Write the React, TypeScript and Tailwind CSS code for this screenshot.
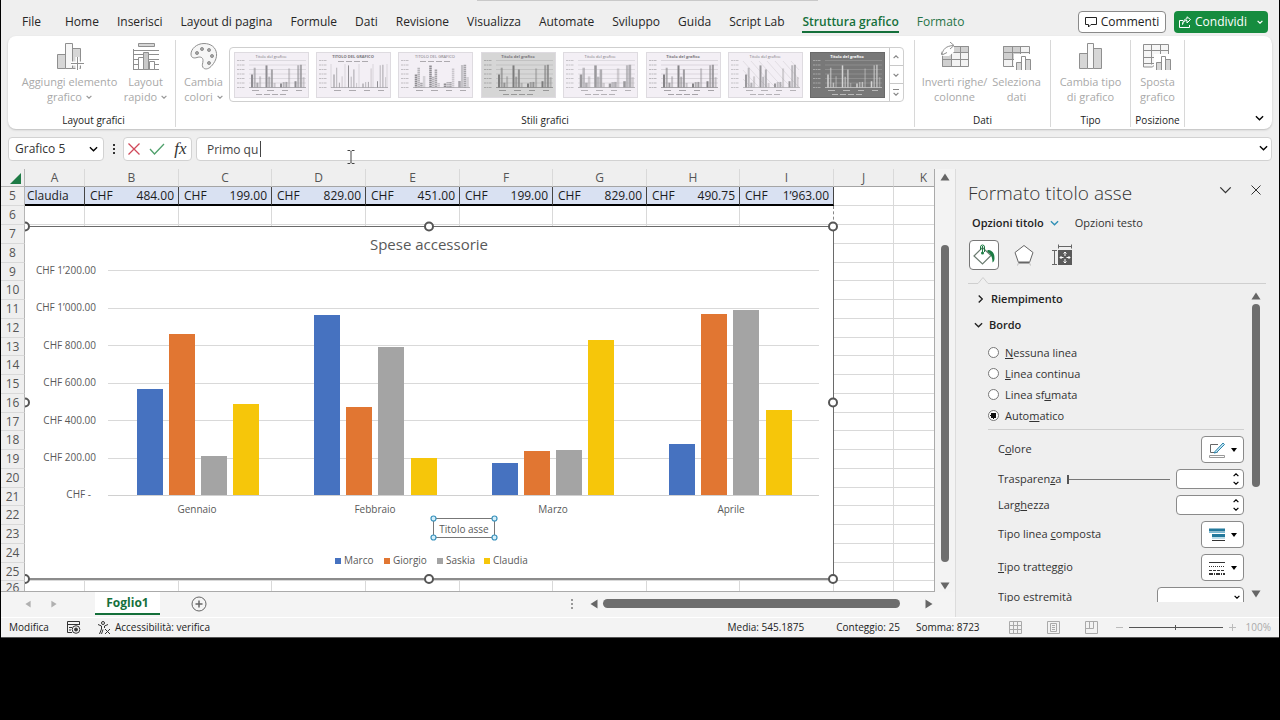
import React from "react";

type IconProps = { className?: string };

const tabs = [
  "Home",
  "Inserisci",
  "Layout di pagina",
  "Formule",
  "Dati",
  "Revisione",
  "Visualizza",
  "Automate",
  "Sviluppo",
  "Guida",
  "Script Lab",
];

const columns = [
  { name: "A", width: "w-[60px]" },
  { name: "B", width: "w-[94px]" },
  { name: "C", width: "w-[93px]" },
  { name: "D", width: "w-[94px]" },
  { name: "E", width: "w-[94px]" },
  { name: "F", width: "w-[93px]" },
  { name: "G", width: "w-[94px]" },
  { name: "H", width: "w-[93px]" },
  { name: "I", width: "w-[94px]" },
  { name: "J", width: "w-[60px]" },
  { name: "K", width: "w-[60px]" },
];

const amounts = ["484.00", "199.00", "829.00", "451.00", "199.00", "829.00", "490.75", "1’963.00"];

const emptyRows = Array.from({ length: 20 }, (_, i) => i + 6);

const series = [
  { name: "Marco", color: "#4672c0", values: [566, 961, 172, 273], legendX: 310 },
  { name: "Giorgio", color: "#e17632", values: [860, 471, 236, 967], legendX: 359 },
  { name: "Saskia", color: "#a4a4a4", values: [210, 787, 242, 988], legendX: 412 },
  { name: "Claudia", color: "#f6c60a", values: [484, 199, 829, 451], legendX: 459 },
];

const months = ["Gennaio", "Febbraio", "Marzo", "Aprile"];

const axisLabels = ["CHF 1’200.00", "CHF 1’000.00", "CHF 800.00", "CHF 600.00", "CHF 400.00", "CHF 200.00"];

function Chevron({ className = "" }: IconProps) {
  return (
    <svg viewBox="0 0 10 6" className={className} fill="none" stroke="currentColor" aria-hidden="true">
      <path d="M1 1l4 4 4-4" />
    </svg>
  );
}

function Triangle({ className = "" }: IconProps) {
  return (
    <svg viewBox="0 0 10 8" className={className} fill="currentColor" aria-hidden="true">
      <path d="M5 .5L9.5 7.5H.5z" />
    </svg>
  );
}

/* ---------- Ribbon icons ---------- */

function AddElementIcon() {
  return (
    <svg viewBox="0 0 28 28" className="h-7 w-7" stroke="#8f8f8f" aria-hidden="true">
      <path d="M1.5 12.5h8v14h-8zM16.5 6.5h8v20h-8z" fill="#d6d6d6" />
      <path d="M9.5 1.500h7v25h-7z" fill="#f6f6f6" />
      <path d="M21.5 15v14M15 21.5h13" stroke="#fff" strokeWidth="4" />
      <path d="M21.5 15v13M15 21.5h13" fill="none" />
    </svg>
  );
}

function QuickLayoutIcon() {
  return (
    <svg viewBox="0 0 28 28" className="h-7 w-7" fill="none" stroke="#8f8f8f" aria-hidden="true">
      <path d="M6.5 1.5h16v3h-16z" fill="#d6d6d6" />
      <path d="M1.5 7v20.5M1 8.5h26M1 12.5h26M1 17.5h26M1 22.5h26M1 27.5h26" />
      <path d="M6.5 15.5h5v12h-5zM17.5 19.5h5v8h-5z" fill="#fff" />
      <path d="M11.5 10.5h5v17h-5z" fill="#c9c9c9" />
    </svg>
  );
}

function PaletteIcon() {
  return (
    <svg viewBox="0 0 28 28" className="h-7 w-7" fill="#f6f6f6" stroke="#8f8f8f" aria-hidden="true">
      <path d="M14 1.5C6.5 1.5 1 7 1 12c0 4 3 4.500 6 3.500s6-.5 6 3-1.500 4 0 7c1.500 2 5 2 8-1 4-4 6-9 5.500-13C26 5.500 21 1.500 14 1.500z" />
      <g fill="#a5a5a5">
        <circle cx="7" cy="11" r="1.5" />
        <circle cx="12" cy="7" r="1.5" />
        <circle cx="19" cy="8" r="1.5" />
        <circle cx="22" cy="14" r="1.5" />
        <circle cx="19" cy="21" r="1.5" />
      </g>
    </svg>
  );
}

function SwapIcon() {
  return (
    <svg viewBox="0 0 28 28" className="h-7 w-7" fill="none" stroke="#8f8f8f" aria-hidden="true">
      <path d="M1.5 4.5h26v20h-26z" fill="#f3f3f3" />
      <path d="M1.5 4.5h26v6h-26zM1.5 10.5h9v14h-9z" fill="#d0d0d0" />
      <path d="M10.5 4.5v20M19.5 4.5v20M1.5 10.5h26M1.5 17.5h26" />
      <path d="M0 0h13v10l-5 4H0z" fill="#fff" stroke="none" />
      <path d="M1 12.5C2 7 5 4 12.5 3.500M9 0l4 3.500L9 7M-.5 9L1 13l5-2.500" />
    </svg>
  );
}

function SelectDataIcon() {
  return (
    <svg viewBox="0 0 28 28" className="h-7 w-7" fill="none" stroke="#8f8f8f" aria-hidden="true">
      <path d="M.5 4.5h26v20H.5z" fill="#f3f3f3" />
      <path d="M.5 4.5h17v13H.5z" fill="#cfcfcf" />
      <path d="M9.5 4.5v20M17.5 4.5v20M.5 10.5h26M.5 17.5h26" />
      <path d="M11 12h17v16H11z" fill="#fff" stroke="none" />
      <path d="M13.5 20.5h5v8h-5zM22.5 17.5h5v11h-5z" fill="#d6d6d6" />
      <path d="M18.5 14.5h4v14h-4z" fill="#fff" />
    </svg>
  );
}

function ColumnsIcon() {
  return (
    <svg viewBox="0 0 28 28" className="h-7 w-7" stroke="#8f8f8f" aria-hidden="true">
      <path d="M2.5 11.5h8v15h-8zM16.5 6.5h8v20h-8z" fill="#d6d6d6" />
      <path d="M10.5 1.5h6v25h-6z" fill="#f8f8f8" />
    </svg>
  );
}

function MoveChartIcon() {
  return (
    <svg viewBox="0 0 28 28" className="h-7 w-7" fill="none" stroke="#8f8f8f" aria-hidden="true">
      <path d="M.5 2.5h25v19l-13 .5-3 3h-9z" fill="#f6f6f6" />
      <path d="M8.5 2.5v20M17.5 2.5v16M.5 8.5h25M.5 15.5h25M.5 21.5h12" />
      <path d="M11 12h17v16H11z" fill="#fff" stroke="none" />
      <path d="M13.5 20.5h5v8h-5zM22.5 17.5h5v11h-5z" fill="#d6d6d6" />
      <path d="M18.5 14.5h4v14h-4z" fill="#fff" />
    </svg>
  );
}

type Thumb = {
  title: string;
  bg: string;
  ink: string;
  grid: "rows" | "columns" | "hatch" | "none";
  dashed?: boolean;
  bold?: boolean;
  barWidth: number;
  topLegend?: boolean;
};

const thumbs: Thumb[] = [
  { title: "Titolo del grafico", bg: "#f3eff5", ink: "#8f8d92", grid: "rows", barWidth: 2 },
  { title: "TITOLO DEL GRAFICO", bg: "#f3eff5", ink: "#8f8d92", grid: "columns", barWidth: 1, bold: true, topLegend: true },
  { title: "TITOLO DEL GRAFICO", bg: "#f3eff5", ink: "#8f8d92", grid: "none", barWidth: 2.5, dashed: true, topLegend: true },
  { title: "Titolo del grafico", bg: "#d6d6d6", ink: "#7c7c7c", grid: "rows", barWidth: 2, bold: true },
  { title: "Titolo del grafico", bg: "#f3eff5", ink: "#9a989c", grid: "rows", barWidth: 2.5 },
  { title: "Titolo del grafico", bg: "#f3eff5", ink: "#858387", grid: "rows", barWidth: 2, bold: true },
  { title: "Titolo del grafico", bg: "#f3eff5", ink: "#9a989c", grid: "hatch", barWidth: 2 },
  { title: "Titolo del grafico", bg: "#787878", ink: "#d5d5d5", grid: "rows", barWidth: 1.5, bold: true },
];

const barOpacity = [1, 0.6, 0.75, 0.4];

function StyleThumb({ thumb }: { thumb: Thumb }) {
  const dark = thumb.bg === "#787878";
  return (
    <svg viewBox="0 0 75 46" className="h-[46px] w-[75px]" aria-hidden="true">
      <rect x=".5" y=".5" width="74" height="45" fill={thumb.bg} stroke={dark ? "#6a6a6a" : "#dedbe0"} />
      <text
        x="37"
        y="6"
        textAnchor="middle"
        fontSize="4"
        fontWeight={thumb.bold ? 700 : 400}
        fill={dark ? "#fff" : "#77757a"}
      >
        {thumb.title}
      </text>
      {[0, 1, 2, 3, 4, 5, 6].map((n) => (
        <g key={n} stroke={thumb.ink}>
          <path d={`M3 ${8.5 + n * 4.5}h8`} strokeDasharray="2 .5" strokeOpacity=".5" />
          {thumb.grid === "rows" && <path d={`M15 ${8.5 + n * 4.5}h57`} strokeWidth=".5" strokeOpacity=".45" />}
          {thumb.grid === "columns" && n < 5 && <path d={`M${15 + n * 14} 12v24`} strokeWidth=".5" strokeOpacity=".5" />}
          {thumb.grid === "hatch" && (
            <path
              d={`M${15 + n * 8} 9l8 9M${15 + n * 8} 18l8 9M${15 + n * 8} 27l8 8`}
              strokeWidth=".4"
              strokeOpacity=".5"
            />
          )}
        </g>
      ))}
      {series.map((s, i) =>
        s.values.map((v, m) => {
          const height = v * 0.023;
          const x = 18 + m * 14.5 + i * 2.7;
          return (
            <path
              key={`${i}-${m}`}
              d={`M${x} ${35.5 - height}V35.5`}
              stroke={thumb.ink}
              strokeWidth={thumb.barWidth}
              strokeOpacity={barOpacity[i]}
              strokeDasharray={thumb.dashed ? "1.5 .5" : undefined}
            />
          );
        })
      )}
      <path d="M15 35.5h57" stroke={thumb.ink} strokeWidth=".6" />
      <path d="M18 38.5h7M33 38.5h7M48 38.5h6M62 38.5h6" stroke={thumb.ink} strokeOpacity=".7" />
      <path d={thumb.topLegend ? "M22 9.5h32" : "M22 42.5h32"} stroke={thumb.ink} strokeDasharray="6 2" strokeOpacity=".7" />
    </svg>
  );
}

function RibbonButton({
  icon,
  lines,
  menu = false,
  className = "",
}: {
  icon: React.ReactNode;
  lines: [string, string];
  menu?: boolean;
  className?: string;
}) {
  return (
    <button className={`flex flex-col items-center pt-0.5 text-[11px] leading-[15px] whitespace-nowrap text-[#a9a9a9] ${className}`}>
      {icon}
      <span className="mt-1">{lines[0]}</span>
      <span className="flex items-center gap-1">
        {lines[1]}
        {menu && <Chevron className="h-1 w-1.5 stroke-2 text-[#999]" />}
      </span>
    </button>
  );
}

function RibbonGroup({ label, className, children }: { label: string; className: string; children: React.ReactNode }) {
  return (
    <section className={`mt-1 mb-0.5 flex flex-col justify-between border-r border-[#d8d8d8] ${className}`}>
      <div className="flex justify-center">{children}</div>
      <h2 className="text-center text-[10px] leading-[14px] text-[#222]">{label}</h2>
    </section>
  );
}

function Ribbon() {
  return (
    <div className="mx-[7px] flex h-[93px] rounded-lg bg-white shadow-[0_1px_2px_#bdbdbd]">
      <RibbonGroup label="Layout grafici" className="w-[168px] pl-1">
        <RibbonButton icon={<AddElementIcon />} lines={["Aggiungi elemento", "grafico"]} menu className="w-[104px]" />
        <RibbonButton icon={<QuickLayoutIcon />} lines={["Layout", "rapido"]} menu className="w-[48px]" />
      </RibbonGroup>

      <RibbonGroup label="Stili grafici" className="w-[739px]">
        <RibbonButton icon={<PaletteIcon />} lines={["Cambia", "colori"]} menu className="w-[50px]" />
        <div className="mt-[7px] mr-2 flex h-[55px] w-[675px] rounded border border-[#cfcfcf]">
          <div className="flex grow items-center justify-between pr-[3px] pl-1">
            {thumbs.map((thumb, i) => (
              <button key={i} aria-label={`Stile ${i + 1}`}>
                <StyleThumb thumb={thumb} />
              </button>
            ))}
          </div>
          <div className="flex w-[14px] flex-col divide-y divide-[#c8c8c8] border-l border-[#c8c8c8] text-[#888]">
            <button aria-label="Su" className="flex flex-1 items-center justify-center">
              <Chevron className="h-1 w-1.5 rotate-180 stroke-2" />
            </button>
            <button aria-label="Giù" className="flex flex-1 items-center justify-center">
              <Chevron className="h-1 w-1.5 stroke-2" />
            </button>
            <button aria-label="Altro" className="flex flex-1 flex-col items-center justify-center gap-0.5">
              <span className="h-px w-1.5 bg-[#888]" />
              <Chevron className="h-1 w-1.5 stroke-2" />
            </button>
          </div>
        </div>
      </RibbonGroup>

      <RibbonGroup label="Dati" className="w-[136px]">
        <RibbonButton icon={<SwapIcon />} lines={["Inverti righe/", "colonne"]} className="w-[68px]" />
        <RibbonButton icon={<SelectDataIcon />} lines={["Seleziona", "dati"]} className="w-[56px]" />
      </RibbonGroup>
      <RibbonGroup label="Tipo" className="w-[80px]">
        <RibbonButton icon={<ColumnsIcon />} lines={["Cambia tipo", "di grafico"]} />
      </RibbonGroup>
      <RibbonGroup label="Posizione" className="w-[54px]">
        <RibbonButton icon={<MoveChartIcon />} lines={["Sposta", "grafico"]} />
      </RibbonGroup>
      <button aria-label="Opzioni barra multifunzione" className="mr-2 mb-2 ml-auto self-end text-black">
        <Chevron className="h-[6px] w-[9px] stroke-[1.5]" />
      </button>
    </div>
  );
}

function TabBar() {
  return (
    <header className="flex h-9 items-center pt-2 pr-[11px] pl-[21px] text-[12px]">
      <div className="absolute top-0 left-[477px] h-px w-[341px] bg-[#c9c9c9]" />
      <nav className="flex items-center whitespace-nowrap text-[#262626]">
        <button className="mr-6">File</button>
        <div className="flex gap-[18px]">
          {tabs.map((tab) => (
            <button key={tab}>{tab}</button>
          ))}
          <button className="border-b-2 border-[#15703b] pt-0.5 font-semibold text-[#15703b]">Struttura grafico</button>
          <button className="text-[#267346]">Formato</button>
        </div>
      </nav>
      <div className="ml-auto flex gap-2">
        <button className="flex h-[22px] w-[88px] items-center justify-center gap-1 rounded border border-[#8a8a8a] bg-white text-[#222]">
          <svg viewBox="0 0 12 12" className="h-3 w-3" fill="none" stroke="currentColor" aria-hidden="true">
            <path d="M.5 1.5h11v7H6L3.5 11V8.5h-3z" />
          </svg>
          Commenti
        </button>
        <button className="flex h-[22px] w-[94px] items-center justify-center gap-1 rounded bg-[#168c3f] text-white">
          <svg viewBox="0 0 12 12" className="h-3 w-3" fill="none" stroke="currentColor" aria-hidden="true">
            <path d="M4 4.5H.5v7h10V9M3.5 8.5C4 5.5 5.5 4.5 8 4.5V7l3.5-3.5L8 .8v2C5.5 3 3.8 5 3.5 8.500z" />
          </svg>
          Condividi
          <Chevron className="ml-1.5 h-1 w-1.5 stroke-2" />
        </button>
      </div>
    </header>
  );
}

function FormulaBar() {
  return (
    <div className="mx-[7px] my-2 flex h-6 items-stretch text-[12px] text-[#333]">
      <div className="relative w-[96px]">
        <select aria-label="Casella nome" className="h-full w-full appearance-none rounded border border-[#d2d2d2] bg-white pl-1.5">
          <option>Grafico 5</option>
        </select>
        <Chevron className="pointer-events-none absolute top-[9px] right-1.5 h-[6px] w-[9px] stroke-[1.5] text-black" />
      </div>
      <div className="flex w-[19px] flex-col items-center justify-center gap-0.5">
        <span className="size-0.5 bg-[#333]" />
        <span className="size-0.5 bg-[#333]" />
        <span className="size-0.5 bg-[#333]" />
      </div>
      <div className="flex w-[69px] items-center justify-around rounded border border-[#d2d2d2] bg-white">
        <button aria-label="Annulla">
          <svg viewBox="0 0 12 12" className="h-3 w-3" stroke="#d0495a" strokeWidth="1.3" aria-hidden="true">
            <path d="M.5.5l11 11M11.5.5l-11 11" />
          </svg>
        </button>
        <button aria-label="Invio">
          <svg viewBox="0 0 16 12" className="h-3 w-4" fill="none" stroke="#4fa06b" strokeWidth="1.3" aria-hidden="true">
            <path d="M1 6l4.5 5L15 1" />
          </svg>
        </button>
        <button aria-label="Inserisci funzione" className="font-['Liberation_Serif',serif] text-[17px] leading-4 italic">
          fx
        </button>
      </div>
      <div className="relative ml-1 grow">
        <input
          aria-label="Barra della formula"
          defaultValue="Primo qu"
          className="h-full w-full rounded border border-[#d2d2d2] bg-white pl-2.5 text-[#444]"
        />
        <span className="absolute top-1 left-16 h-4 w-px bg-[#444]" />
        <svg viewBox="0 0 8 16" className="absolute top-3 left-[151px] h-4 w-2" fill="none" stroke="#444" aria-hidden="true">
          <path d="M.5 1.5h2.5l1 1 1-1h2.5M4 2.5v11M.5 14.5h2.5l1-1 1 1h2.5" />
        </svg>
        <Chevron className="absolute top-2 right-1 h-[6px] w-[9px] stroke-[1.5] text-black" />
      </div>
    </div>
  );
}

function Chart() {
  const baseline = 276;
  return (
    <svg
      viewBox="0 0 815 367"
      className="absolute top-[50px] left-6 h-[367px] w-[815px]"
      fill="#595959"
      fontSize="10"
      role="img"
      aria-label="Spese accessorie"
    >
      <rect x="0" y="7" width="808" height="353" fill="#fff" />
      <path d="M0 7.5h808.5v353" fill="none" stroke="#6a6a6a" />
      <path d="M0 360h808" stroke="#8c8c8c" strokeWidth="2" />
      <text x="404" y="31" textAnchor="middle" fontSize="15">
        Spese accessorie
      </text>
      {axisLabels.map((label, i) => (
        <g key={label}>
          <text x="71" y={Math.round(55 + i * 37.4)} textAnchor="end">
            {label}
          </text>
          <path d={`M83 ${Math.round(51 + i * 37.5) + 0.5}h711`} stroke="#d9d9d9" />
        </g>
      ))}
      <text x="66" y="279" textAnchor="end">
        CHF -
      </text>
      {series.map((s, i) =>
        s.values.map((v, m) => {
          const height = Math.round(v * 0.1875);
          return (
            <rect
              key={`${s.name}-${m}`}
              x={Math.round(111.5 + m * 177.5 + i * 32.2)}
              y={baseline - height}
              width="26"
              height={height}
              fill={s.color}
            />
          );
        })
      )}
      <path d="M83 276.5h711" stroke="#d0d0d0" />
      {months.map((month, m) => (
        <text key={month} x={172 + m * 178} y="294" textAnchor="middle">
          {month}
        </text>
      ))}
      {series.map((s) => (
        <g key={s.name}>
          <rect x={s.legendX} y="339" width="6" height="6" fill={s.color} />
          <text x={s.legendX + 9} y="345">
            {s.name}
          </text>
        </g>
      ))}

      {/* axis title being edited */}
      <rect x="408.5" y="299.5" width="61" height="19" fill="#fff" stroke="#777" />
      <text x="439" y="314" textAnchor="middle">
        Titolo asse
      </text>
      <g fill="#d5effa" stroke="#3a93bd" strokeWidth="1.2">
        <circle cx="408.5" cy="299.5" r="2.5" />
        <circle cx="469.5" cy="299.5" r="2.5" />
        <circle cx="408.5" cy="318.5" r="2.5" />
        <circle cx="469.5" cy="318.5" r="2.5" />
      </g>

      <g fill="#fff" stroke="#555" strokeWidth="2">
        {[0, 404, 808].map((x) => (
          <React.Fragment key={x}>
            <circle cx={x} cy="7.5" r="4" />
            <circle cx={x} cy="360" r="4" />
          </React.Fragment>
        ))}
        <circle cx="0" cy="183.5" r="4" />
        <circle cx="808" cy="183.5" r="4" />
      </g>
    </svg>
  );
}

function Sheet() {
  return (
    <div className="relative min-w-0 grow overflow-hidden border-r border-b border-[#aaa] bg-white">
      <table className="w-[853px] table-fixed border-separate border-spacing-0 text-[12px] leading-none">
        <thead>
          <tr className="h-[18px] text-[#555]">
            <th className="w-6 border-r border-b border-[#b5b5b5] bg-[#efefef] p-0 pr-0.5" aria-label="Seleziona tutto">
              <svg viewBox="0 0 12 12" className="ml-auto block h-3 w-3" fill="#1e7b45" aria-hidden="true">
                <path d="M11 1v11H0z" />
              </svg>
            </th>
            {columns.map((col) => (
              <th
                key={col.name}
                className={`border-r border-b border-r-[#d9d9d9] border-b-[#a5a5a5] bg-[#efefef] p-0 font-normal ${col.width}`}
              >
                {col.name}
              </th>
            ))}
          </tr>
        </thead>
        <tbody>
          <tr className="h-[19px] text-[#1c1c1c]">
            <th className="border-r border-b border-r-[#b5b5b5] border-b-[#d9d9d9] bg-[#efefef] p-0 font-normal text-[#555]">5</th>
            <td className="border-r border-b-2 border-r-[#444] border-b-black bg-[#d9e1f2] p-0 pl-0.5">Claudia</td>
            {amounts.map((amount, i) => (
              <td key={i} className="border-r border-b-2 border-r-[#444] border-b-black bg-[#d9e1f2] p-0 last-of-type:border-r-0">
                <div className="flex justify-between pr-1 pl-[5px]">
                  <span>CHF</span>
                  <span>{amount}</span>
                </div>
              </td>
            ))}
            <td className="border-r border-b border-[#d9d9d9] p-0" />
            <td className="border-b border-[#d9d9d9] p-0" />
          </tr>
          {emptyRows.map((row, i) => (
            <tr key={row} className={i % 4 === 3 ? "h-[18px]" : "h-[19px]"}>
              <th className="border-r border-b border-r-[#b5b5b5] border-b-[#d9d9d9] bg-[#efefef] p-0 font-normal text-[#555]">
                {row}
              </th>
              {columns.map((col) => (
                <td
                  key={col.name}
                  className={
                    col.name === "I"
                      ? "border-r border-b border-r-[#888] border-b-[#d9d9d9] p-0 [border-right-style:dashed]"
                      : "border-r border-b border-[#d9d9d9] p-0"
                  }
                />
              ))}
            </tr>
          ))}
          <tr className="h-[10px]">
            <th className="border-r border-[#b5b5b5] bg-[#efefef] p-0 font-normal text-[#555]">
              <div className="h-[9px] overflow-hidden">26</div>
            </th>
            {columns.map((col) => (
              <td key={col.name} className="border-r border-[#d9d9d9] p-0" />
            ))}
          </tr>
        </tbody>
      </table>
      <Chart />
    </div>
  );
}

function SheetTabs() {
  return (
    <div className="flex h-[25px] items-center bg-[#f4f4f4] pb-0.5 text-[#666]">
      <div className="flex w-[94px] items-center gap-[18px] pl-[23px] text-[#b0b0b0]">
        <button aria-label="Foglio precedente">
          <Triangle className="h-1.5 w-2 -rotate-90" />
        </button>
        <button aria-label="Foglio successivo">
          <Triangle className="h-1.5 w-2 rotate-90" />
        </button>
      </div>
      <button className="h-[23px] w-[65px] border-b-2 border-[#15703b] bg-white text-[12px] font-bold text-[#15703b]">
        Foglio1
      </button>
      <button aria-label="Nuovo foglio" className="ml-[31px]">
        <svg viewBox="0 0 16 16" className="h-4 w-4" fill="none" stroke="currentColor" aria-hidden="true">
          <circle cx="8" cy="8" r="7" />
          <path d="M4.5 8h7M8 4.5v7" strokeWidth="1.5" />
        </svg>
      </button>
      <div className="ml-auto flex flex-col gap-0.5">
        <span className="size-0.5 bg-[#999]" />
        <span className="size-0.5 bg-[#999]" />
        <span className="size-0.5 bg-[#999]" />
      </div>
      <div className="ml-4 flex items-center">
        <Triangle className="h-2 w-2.5 -rotate-90" />
        <div className="ml-1 h-[9px] w-[297px] rounded-full bg-[#6e6e6e]" />
        <Triangle className="mr-[21px] ml-6 h-2 w-2.5 rotate-90" />
      </div>
    </div>
  );
}

function Spinner({ id }: { id: string }) {
  return (
    <div className="relative">
      <input id={id} className="block h-5 w-[68px] rounded border border-[#8a8a8a] bg-white px-1" />
      <div className="absolute top-1 right-[5px] flex flex-col gap-1 text-black">
        <button aria-label="Aumenta">
          <Chevron className="block h-1 w-1.5 rotate-180 stroke-2" />
        </button>
        <button aria-label="Riduci">
          <Chevron className="block h-1 w-1.5 stroke-2" />
        </button>
      </div>
    </div>
  );
}

function PickerButton({ label, children }: { label: string; children: React.ReactNode }) {
  return (
    <button aria-label={label} className="flex h-[27px] w-[43px] items-center justify-center gap-1.5 rounded border border-[#8a8a8a] bg-white">
      {children}
      <svg viewBox="0 0 6 4" className="h-1 w-1.5" aria-hidden="true">
        <path d="M0 0h6L3 4z" />
      </svg>
    </button>
  );
}

function LineOption({ before = "", letter, after, checked = false }: { before?: string; letter: string; after: string; checked?: boolean }) {
  return (
    <label className="flex h-[21px] items-center gap-1.5">
      <input
        type="radio"
        name="bordo"
        defaultChecked={checked}
        className="mb-0.5 size-[11px] appearance-none rounded-full border border-[#777] bg-white checked:bg-[radial-gradient(circle,#111_0_3px,#fff_3px)]"
      />
      <span>
        {before}
        <u>{letter}</u>
        {after}
      </span>
    </label>
  );
}

function FormatPane() {
  return (
    <aside className="flex w-[324px] shrink-0 flex-col border-l border-[#dcdcdc] pl-3 text-[11px] text-[#333]">
      <div className="flex items-center pt-[11px]">
        <h1 className="text-[19px] leading-[26px] font-light text-[#333]">Formato titolo asse</h1>
        <button aria-label="Opzioni riquadro" className="mb-1.5 ml-auto">
          <Chevron className="h-2 w-[13px]" />
        </button>
        <button aria-label="Chiudi" className="mr-[18px] mb-1.5 ml-[19px]">
          <svg viewBox="0 0 10 10" className="h-2.5 w-2.5" stroke="currentColor" aria-hidden="true">
            <path d="M.5.5l9 9M9.5.5l-9 9" />
          </svg>
        </button>
      </div>

      <div className="mt-2 flex items-center pl-1 leading-[18px]">
        <button className="font-semibold text-[#222]">Opzioni titolo</button>
        <Chevron className="ml-1.5 h-[6px] w-[9px] stroke-[1.5] text-[#2f8fb5]" />
        <button className="ml-4">Opzioni testo</button>
      </div>

      <div className="mt-2 flex items-center gap-[14px] pl-px">
        <button aria-label="Riempimento e linea" className="flex size-[30px] items-center justify-center rounded border border-[#777] bg-white">
          <svg viewBox="0 0 24 24" className="h-6 w-6" fill="none" aria-hidden="true">
            <path d="M2 13l8.500-8.500L19 12.5 10.500 21z" stroke="#6b7b70" strokeWidth="1.2" />
            <path d="M15.500 7c4 0 7 2.500 7 8 0 2-.5 3.500-2 4.500C20.500 15 19 10.500 15.500 9z" fill="#1c7c44" />
            <path d="M8.500 7V4a2 2 0 0 1 4 0v5" stroke="#1c7c44" />
            <path d="M10.500 3v6" stroke="#1c7c44" />
            <circle cx="10.500" cy="10" r="1.5" fill="#1c7c44" />
          </svg>
        </button>
        <button aria-label="Effetti">
          <svg viewBox="0 0 22 22" className="h-[22px] w-[22px]" fill="#fff" stroke="#666" aria-hidden="true">
            <path d="M11 1.5l9 7-3.500 10h-11L2 8.500z" />
            <path d="M6 18.5h10" strokeWidth="2" />
            <path d="M4.5 21.5l1-2.500M17.500 21.500l-1-2.500" stroke="#bbb" />
          </svg>
        </button>
        <button aria-label="Dimensioni e proprietà">
          <svg viewBox="0 0 22 22" className="ml-0.5 h-[22px] w-[22px]" fill="none" stroke="#666" aria-hidden="true">
            <path d="M7.5 2.5h13M7.5.5v4M20.5.5v4M3.5 7v13M1 6.5h5M1 20.5h5" />
            <path d="M7 6h14v15H7z" fill="#5a5a5a" stroke="none" />
            <path
              d="M14 8v11M9 13.5h10M12.5 9.5L14 8l1.5 1.5M12.5 17.5L14 19l1.5-1.5M10.5 12L9 13.5l1.5 1.5M17.5 12l1.5 1.5-1.5 1.5"
              stroke="#fff"
            />
            <path d="M12.5 12h3v3h-3z" fill="#5a5a5a" stroke="none" />
          </svg>
        </button>
      </div>

      <svg viewBox="0 0 298 8" className="mt-1.5 h-2 w-[298px]" fill="none" stroke="#cfcfcf" aria-hidden="true">
        <path d="M0 7.5h10l5-6 5 6h278" />
      </svg>

      <div className="flex pr-[15px]">
        <div className="grow pt-0.5 pr-1">
          <button className="flex h-[26px] items-center gap-1.5 pl-2 font-semibold text-[#222]">
            <Chevron className="h-[6px] w-[9px] -rotate-90 stroke-[1.5]" />
            Riempimento
          </button>
          <button className="flex h-[26px] items-center gap-1.5 pl-1.5 font-semibold text-[#222]">
            <Chevron className="h-[6px] w-[9px] stroke-[1.5]" />
            Bordo
          </button>

          <fieldset className="mt-[5px] ml-5 border-b border-[#cfcfcf] pb-0.5">
            <LineOption letter="N" after="essuna linea" />
            <LineOption letter="L" after="inea continua" />
            <LineOption before="Linea sf" letter="u" after="mata" />
            <LineOption before="Auto" letter="m" after="atico" checked />
          </fieldset>

          <div className="mt-1.5 ml-[30px] flex flex-col gap-1.5">
            <div className="flex items-center justify-between">
              <span>
                C<u>o</u>lore
              </span>
              <PickerButton label="Colore">
                <svg viewBox="0 0 16 16" className="h-4 w-4" fill="none" stroke="#666" aria-hidden="true">
                  <path d="M9 2.5H1.5v8h7" />
                  <path d="M6 9.5L14 1l1.500 1.500-8 8-2.500.5z" stroke="#2c86ad" fill="#c3e4f2" />
                  <path d="M.5 13.5h15v2H.5z" stroke="#999" />
                </svg>
              </PickerButton>
            </div>
            <div className="flex items-center">
              <label htmlFor="trasparenza">
                Trasparen<u>z</u>a
              </label>
              <input
                type="range"
                aria-label="Trasparenza"
                defaultValue={0}
                className="mx-1.5 h-3 w-0 grow appearance-none bg-transparent [&::-webkit-slider-runnable-track]:h-px [&::-webkit-slider-runnable-track]:bg-[#777] [&::-webkit-slider-thumb]:-mt-1 [&::-webkit-slider-thumb]:h-[9px] [&::-webkit-slider-thumb]:w-0.5 [&::-webkit-slider-thumb]:appearance-none [&::-webkit-slider-thumb]:bg-[#555]"
              />
              <Spinner id="trasparenza" />
            </div>
            <div className="flex items-center justify-between">
              <label htmlFor="larghezza">
                Larg<u>h</u>ezza
              </label>
              <Spinner id="larghezza" />
            </div>
            <div className="flex items-center justify-between">
              <span>
                Tipo linea <u>c</u>omposta
              </span>
              <PickerButton label="Tipo linea composta">
                <svg viewBox="0 0 16 14" className="h-[14px] w-4" fill="none" aria-hidden="true">
                  <path d="M0 2h16M3 7.5h13" stroke="#23799c" strokeWidth="3" />
                  <path d="M0 4.5h16M3 10h13" stroke="#7dbad3" />
                  <path d="M3 12.5h13" stroke="#333" />
                </svg>
              </PickerButton>
            </div>
            <div className="flex items-center justify-between">
              <span>
                <u>T</u>ipo tratteggio
              </span>
              <PickerButton label="Tipo tratteggio">
                <svg viewBox="0 0 16 14" className="h-[14px] w-4" fill="none" stroke="#333" aria-hidden="true">
                  <path d="M0 1.5h16" />
                  <path d="M0 5.5h16" strokeDasharray="1 1" />
                  <path d="M0 9.5h16" strokeDasharray="3 1" />
                  <path d="M0 13h16" strokeDasharray="4 1 1 1" strokeWidth="2" />
                </svg>
              </PickerButton>
            </div>
            <div className="flex h-[15px] items-start justify-between overflow-hidden">
              <label htmlFor="estremita" className="pt-0.5">
                Tipo estremità
              </label>
              <div className="relative">
                <select id="estremita" className="h-5 w-[87px] appearance-none rounded border border-[#8a8a8a] bg-white" />
                <Chevron className="pointer-events-none absolute top-2 right-1 h-1 w-1.5 stroke-2 text-black" />
              </div>
            </div>
          </div>
        </div>

        <div className="flex w-4 flex-col items-center pt-2 text-[#666]">
          <Triangle className="h-2 w-2.5" />
          <div className="mt-1 h-[183px] w-2 rounded-full bg-[#6e6e6e]" />
          <Triangle className="mt-auto mb-1 h-2 w-2.5 rotate-180" />
        </div>
      </div>
    </aside>
  );
}

function StatusBar() {
  return (
    <footer className="flex h-[21px] items-center border-t border-b border-t-white border-b-[#555] bg-[#f3f3f3] px-2 text-[10px] text-[#222]">
      <span>Modifica</span>
      <button aria-label="Registra macro" className="ml-[18px]">
        <svg viewBox="0 0 14 13" className="h-[13px] w-[14px]" fill="none" stroke="#333" aria-hidden="true">
          <path d="M5 11.5H.5V.5h12V4M.5 3.5h12M2 6.5h3M2 9h2" />
          <circle cx="9" cy="8.5" r="3.8" />
          <circle cx="9" cy="8.5" r="1.5" fill="#333" />
        </svg>
      </button>
      <button className="ml-4 flex items-center gap-1">
        <svg viewBox="0 0 14 14" className="h-[14px] w-[14px]" fill="none" stroke="#333" aria-hidden="true">
          <circle cx="6" cy="2" r="1.5" />
          <path d="M1 3.5l3.500 1.500v3L2.500 13M11 3.500L7.500 5v2M6 8.500L4.500 13M8 8l5 5M13 8l-5 5" />
        </svg>
        Accessibilità: verifica
      </button>
      <div className="ml-auto flex gap-4">
        <span className="mr-4">Media: 545.1875</span>
        <span>Conteggio: 25</span>
        <span>Somma: 8723</span>
      </div>
      <div className="ml-[29px] flex items-center gap-[25px]">
        <button aria-label="Normale">
          <svg viewBox="0 0 13 13" className="h-[13px] w-[13px]" fill="none" stroke="#aaa" aria-hidden="true">
            <path d="M.5.5h12v12H.5zM.5 4.5h12M.5 8.5h12M4.5.5v12M8.5.5v12" />
          </svg>
        </button>
        <button aria-label="Layout di pagina">
          <svg viewBox="0 0 13 13" className="h-[13px] w-[13px]" fill="none" stroke="#aaa" aria-hidden="true">
            <path d="M.5.5h12v12H.5zM3.5 2.5h6v8h-6zM5 4.5h3M5 6.5h3M5 8.5h3" />
          </svg>
        </button>
        <button aria-label="Anteprima interruzioni">
          <svg viewBox="0 0 13 13" className="h-[13px] w-[13px]" fill="none" stroke="#aaa" aria-hidden="true">
            <path d="M.5.5h12v12H.5zM4.5.5v7M8.5.5v7M.5 7.5h8" />
          </svg>
        </button>
      </div>
      <div className="ml-[18px] flex items-center text-[#aaa]">
        <button aria-label="Zoom indietro" className="h-px w-[7px] bg-[#bbb]" />
        <input
          type="range"
          aria-label="Zoom"
          defaultValue={50}
          className="mx-1.5 h-3 w-[94px] appearance-none bg-transparent [&::-webkit-slider-runnable-track]:h-px [&::-webkit-slider-runnable-track]:bg-[#555] [&::-webkit-slider-thumb]:-mt-0.5 [&::-webkit-slider-thumb]:h-[5px] [&::-webkit-slider-thumb]:w-px [&::-webkit-slider-thumb]:appearance-none [&::-webkit-slider-thumb]:bg-[#555]"
        />
        <button aria-label="Zoom avanti">
          <svg viewBox="0 0 7 7" className="h-[7px] w-[7px]" stroke="#bbb" aria-hidden="true">
            <path d="M0 3.5h7M3.5 0v7" />
          </svg>
        </button>
        <span className="ml-2.5">100%</span>
      </div>
    </footer>
  );
}

export default function App() {
  return (
    <div className="min-h-screen bg-black px-px font-['Open_Sans','Noto_Sans',sans-serif]">
      <div className="bg-[#efefef]">
        <TabBar />
        <Ribbon />
        <FormulaBar />
        <main className="flex">
          <div className="flex min-w-0 grow flex-col">
            <div className="flex">
              <Sheet />
              <div className="flex w-5 shrink-0 flex-col items-center bg-[#f3f3f3] pt-1 text-[#666]">
                <Triangle className="h-2 w-2.5" />
                <div className="mt-16 h-[317px] w-2 rounded-full bg-[#6e6e6e]" />
                <Triangle className="mt-auto mb-0.5 h-2 w-2.5 rotate-180" />
              </div>
            </div>
            <SheetTabs />
          </div>
          <FormatPane />
        </main>
        <StatusBar />
      </div>
    </div>
  );
}
